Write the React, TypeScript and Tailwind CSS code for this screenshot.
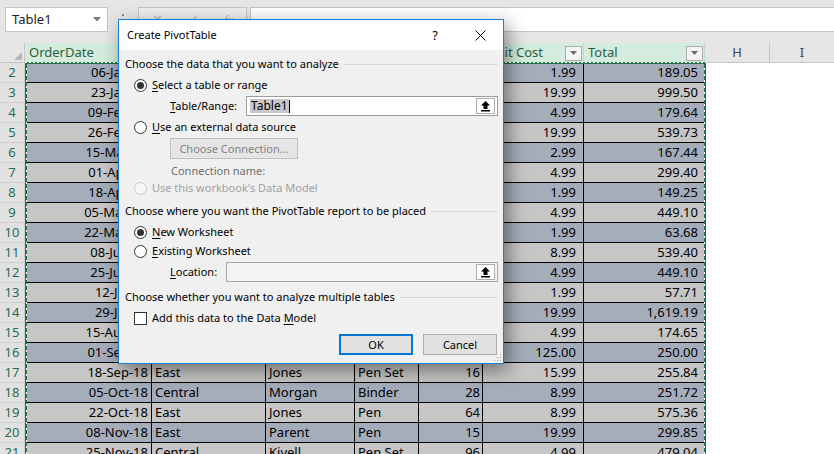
import React from "react";

const rows: [string, string, string, string, number, string, string][] = [
  ["06-Jan-18", "East", "Jones", "Pencil", 95, "1.99", "189.05"],
  ["23-Jan-18", "Central", "Kivell", "Binder", 50, "19.99", "999.50"],
  ["09-Feb-18", "Central", "Jardine", "Pencil", 36, "4.99", "179.64"],
  ["26-Feb-18", "Central", "Gill", "Pen", 27, "19.99", "539.73"],
  ["15-Mar-18", "West", "Sorvino", "Pencil", 56, "2.99", "167.44"],
  ["01-Apr-18", "East", "Jones", "Binder", 60, "4.99", "299.40"],
  ["18-Apr-18", "Central", "Andrews", "Pencil", 75, "1.99", "149.25"],
  ["05-May-18", "Central", "Jardine", "Pencil", 90, "4.99", "449.10"],
  ["22-May-18", "West", "Thompson", "Pencil", 32, "1.99", "63.68"],
  ["08-Jun-18", "East", "Jones", "Binder", 60, "8.99", "539.40"],
  ["25-Jun-18", "Central", "Morgan", "Pencil", 90, "4.99", "449.10"],
  ["12-Jul-18", "East", "Howard", "Binder", 29, "1.99", "57.71"],
  ["29-Jul-18", "East", "Parent", "Binder", 81, "19.99", "1,619.19"],
  ["15-Aug-18", "East", "Jones", "Pencil", 35, "4.99", "174.65"],
  ["01-Sep-18", "Central", "Smith", "Desk", 2, "125.00", "250.00"],
  ["18-Sep-18", "East", "Jones", "Pen Set", 16, "15.99", "255.84"],
  ["05-Oct-18", "Central", "Morgan", "Binder", 28, "8.99", "251.72"],
  ["22-Oct-18", "East", "Jones", "Pen", 64, "8.99", "575.36"],
  ["08-Nov-18", "East", "Parent", "Pen", 15, "19.99", "299.85"],
  ["25-Nov-18", "Central", "Kivell", "Pen Set", 96, "4.99", "479.04"],
];

function FilterButton() {
  return (
    <div className="ml-auto mr-[1px] w-[17px] h-[15px] border border-[#ababab] bg-[#f4f4f4] flex items-center justify-center shrink-0">
      <svg width="7" height="4" viewBox="0 0 7 4">
        <polygon points="0,0 7,0 3.5,4" fill="#6a6a6a" />
      </svg>
    </div>
  );
}

function HeaderCell({ label, w }: { label: string; w: string }) {
  return (
    <div className={`${w} shrink-0 h-full bg-[#d3ecdd] border-r border-[#c3d6ca] flex items-center pl-[4px] text-[#2b5f43] overflow-hidden whitespace-nowrap`}>
      <span>{label}</span>
      <FilterButton />
    </div>
  );
}

function Radio({ checked, disabled }: { checked?: boolean; disabled?: boolean }) {
  return (
    <span
      className={`w-[13px] h-[13px] rounded-full border flex items-center justify-center shrink-0 ${
        disabled ? "border-[#c8c8c8] bg-[#f6f6f6]" : "border-[#333333] bg-white"
      }`}
    >
      {checked && <span className="w-[7px] h-[7px] rounded-full bg-[#333333]" />}
    </span>
  );
}

function UpArrowButton() {
  return (
    <div className="w-[19px] h-[16px] my-auto mr-[2px] border border-[#adadad] bg-white flex items-center justify-center shrink-0">
      <svg width="11" height="12" viewBox="0 0 11 12">
        <polygon points="5.5,1 1,5.5 3.5,5.5 3.5,9 7.5,9 7.5,5.5 10,5.5" fill="#000" />
        <rect x="1" y="10" width="9" height="1.5" fill="#000" />
      </svg>
    </div>
  );
}

function Heading({ children }: { children: React.ReactNode }) {
  return (
    <div className="flex items-center h-[16px]">
      <span className="whitespace-nowrap">{children}</span>
      <div className="flex-1 h-px bg-[#dadada] ml-[5px]" />
    </div>
  );
}

function U({ children }: { children: React.ReactNode }) {
  return <span className="underline underline-offset-[2px] decoration-1">{children}</span>;
}

function Dialog() {
  return (
    <div className="absolute left-[118px] top-[19px] w-[386px] h-[345px] border border-[#1a7fd4] bg-[#f0f0f0] shadow-[4px_6px_18px_rgba(0,0,0,0.45)] flex flex-col font-['Noto_Sans',sans-serif] text-[11px] leading-[14px] text-black">
      {/* Title bar */}
      <div className="h-[30px] bg-white flex items-center shrink-0">
        <span className="pl-[8px] text-[11px]">Create PivotTable</span>
        <div className="ml-auto w-[44px] h-full flex items-center justify-center text-[13px]">?</div>
        <div className="w-[46px] h-full flex items-center justify-center">
          <svg width="11" height="11" viewBox="0 0 11 11">
            <path d="M0.5 0.5 L10.5 10.5 M10.5 0.5 L0.5 10.5" stroke="#000" strokeWidth="1" />
          </svg>
        </div>
      </div>

      {/* Body */}
      <div className="flex flex-col pl-[6px] pr-[5px] pt-[6px]">
        <Heading>Choose the data that you want to analyze</Heading>

        <div className="mt-[5px] h-[16px] flex items-center ml-[9px] gap-[5px]">
          <Radio checked />
          <span>
            <U>S</U>elect a table or range
          </span>
        </div>

        <div className="mt-[3px] h-[20px] flex items-center">
          <span className="ml-[45px] w-[76px] shrink-0">
            <U>T</U>able/Range:
          </span>
          <div className="flex-1 h-full border border-[#9c9c9c] bg-white flex items-center">
            <span className="ml-[3px] bg-[#c8c8c8] px-[1px] leading-[14px] text-[12px]">Table1</span>
            <span className="w-px h-[13px] bg-black" />
            <div className="ml-auto h-full flex">
              <UpArrowButton />
            </div>
          </div>
        </div>

        <div className="mt-[3px] h-[16px] flex items-center ml-[9px] gap-[5px]">
          <Radio />
          <span>
            <U>U</U>se an external data source
          </span>
        </div>

        <div className="mt-[3px] h-[21px] ml-[45px] w-[128px] border border-[#bfbfbf] bg-[#e5e5e5] text-[#838383] flex items-center justify-center">
          Choose Connection...
        </div>

        <div className="mt-[4px] h-[16px] flex items-center ml-[46px] text-[#6d6d6d]">Connection name:</div>

        <div className="mt-[1px] h-[16px] flex items-center ml-[9px] gap-[5px] text-[#a0a0a0]">
          <Radio disabled />
          <span>Use this workbook's Data Model</span>
        </div>

        <div className="mt-[7px]">
          <Heading>Choose where you want the PivotTable report to be placed</Heading>
        </div>

        <div className="mt-[5px] h-[16px] flex items-center ml-[9px] gap-[5px]">
          <Radio checked />
          <span>
            <U>N</U>ew Worksheet
          </span>
        </div>

        <div className="mt-[3px] h-[16px] flex items-center ml-[9px] gap-[5px]">
          <Radio />
          <span>
            <U>E</U>xisting Worksheet
          </span>
        </div>

        <div className="mt-[3px] h-[20px] flex items-center">
          <span className="ml-[45px] w-[56px] shrink-0">
            <U>L</U>ocation:
          </span>
          <div className="flex-1 h-full border border-[#a8a8a8] bg-[#f3f3f3] flex items-center">
            <div className="ml-auto h-full flex">
              <UpArrowButton />
            </div>
          </div>
        </div>

        <div className="mt-[7px]">
          <Heading>Choose whether you want to analyze multiple tables</Heading>
        </div>

        <div className="mt-[5px] h-[16px] flex items-center ml-[9px] gap-[5px]">
          <span className="w-[13px] h-[13px] border border-[#333333] bg-white shrink-0" />
          <span>
            Add this data to the Data <U>M</U>odel
          </span>
        </div>

        <div className="mt-[8px] h-[21px] flex justify-end gap-[10px] pr-[1px]">
          <div className="w-[74px] h-full border-2 border-[#0078d7] bg-[#e1e1e1] flex items-center justify-center">OK</div>
          <div className="w-[74px] h-full border border-[#adadad] bg-[#e1e1e1] flex items-center justify-center">Cancel</div>
        </div>
      </div>

      {/* Resize grip */}
      <svg className="absolute right-[1px] bottom-[1px]" width="10" height="10" viewBox="0 0 10 10">
        <rect x="8" y="2" width="1" height="1" fill="#a0a0a0" />
        <rect x="5" y="5" width="1" height="1" fill="#a0a0a0" />
        <rect x="8" y="5" width="1" height="1" fill="#a0a0a0" />
        <rect x="2" y="8" width="1" height="1" fill="#a0a0a0" />
        <rect x="5" y="8" width="1" height="1" fill="#a0a0a0" />
        <rect x="8" y="8" width="1" height="1" fill="#a0a0a0" />
      </svg>
    </div>
  );
}

export default function App() {
  return (
    <div className="relative w-[834px] h-[454px] overflow-hidden bg-white font-['Noto_Sans',sans-serif] text-[13px] text-black">
      {/* Formula bar */}
      <div className="h-[43px] bg-[#e6e6e6] flex items-start pt-[7px]">
        <div className="ml-[5px] w-[103px] h-[25px] bg-white border border-[#c6c6c6] flex items-center pl-[6px] pr-[6px] shrink-0">
          <span className="text-[#222]">Table1</span>
          <svg className="ml-auto" width="8" height="5" viewBox="0 0 8 5">
            <polygon points="0,0 8,0 4,4.5" fill="#777" />
          </svg>
        </div>
        <div className="w-[30px] h-[25px] flex flex-col items-center justify-center gap-[3px] shrink-0">
          <span className="w-[2px] h-[2px] bg-[#8a8a8a]" />
          <span className="w-[2px] h-[2px] bg-[#8a8a8a]" />
          <span className="w-[2px] h-[2px] bg-[#8a8a8a]" />
        </div>
        <div className="w-[109px] h-[25px] border border-[#c6c6c6] bg-[#eeeeee] flex items-center justify-around text-[#b4b4b4] shrink-0">
          <span>✕</span>
          <span>✓</span>
          <span className="italic font-['Liberation_Serif',serif]">fx</span>
        </div>
        <div className="ml-[3px] flex-1 h-[25px] bg-white border border-r-0 border-[#c6c6c6]" />
      </div>

      {/* Grid */}
      <div className="relative">
        {/* Column header row */}
        <div className="flex h-[20px]">
          <div className="w-[25px] shrink-0 h-full bg-[#e6e6e6] border-r border-b border-[#c6c6c6] flex items-end justify-end pr-[2px] pb-[2px]">
            <svg width="8" height="8" viewBox="0 0 8 8">
              <polygon points="8,0 8,8 0,8" fill="#b6b6b6" />
            </svg>
          </div>
          <HeaderCell label="OrderDate" w="w-[127px]" />
          <HeaderCell label="Region" w="w-[114px]" />
          <HeaderCell label="Rep" w="w-[89px]" />
          <HeaderCell label="Item" w="w-[64px]" />
          <HeaderCell label="Units" w="w-[64px]" />
          <HeaderCell label="Unit Cost" w="w-[101px]" />
          <HeaderCell label="Total" w="w-[121px]" />
          <div className="w-[65px] shrink-0 h-full bg-[#e6e6e6] border-r border-b border-[#c6c6c6] flex items-center justify-center text-[#444]">
            H
          </div>
          <div className="flex-1 h-full bg-[#e6e6e6] border-b border-[#c6c6c6] flex items-center justify-center text-[#444]">
            I
          </div>
        </div>

        {/* Data rows */}
        {rows.map((r, i) => {
          const bg = i % 2 === 0 ? "bg-[#a6adba]" : "bg-[#c6c6c6]";
          return (
            <div key={i} className="flex h-[20px]">
              <div className="w-[25px] shrink-0 h-full bg-[#e1e1e1] border-b border-r border-[#cfcfcf] flex items-center justify-center text-[#2a6b4e]">
                {i + 2}
              </div>
              <div className={`w-[127px] shrink-0 h-full ${bg} border-r border-b border-black flex items-center justify-end pr-[3px]`}>{r[0]}</div>
              <div className={`w-[114px] shrink-0 h-full ${bg} border-r border-b border-black flex items-center pl-[3px]`}>{r[1]}</div>
              <div className={`w-[89px] shrink-0 h-full ${bg} border-r border-b border-black flex items-center pl-[3px]`}>{r[2]}</div>
              <div className={`w-[64px] shrink-0 h-full ${bg} border-r border-b border-black flex items-center pl-[3px]`}>{r[3]}</div>
              <div className={`w-[64px] shrink-0 h-full ${bg} border-r border-b border-black flex items-center justify-end pr-[2px]`}>{r[4]}</div>
              <div className={`w-[101px] shrink-0 h-full ${bg} border-r border-b border-black flex items-center justify-end pr-[7px]`}>{r[5]}</div>
              <div className={`w-[121px] shrink-0 h-full ${bg} border-b border-black flex items-center justify-end pr-[7px]`}>{r[6]}</div>
              <div className="flex-1 h-full bg-white" />
            </div>
          );
        })}

        {/* Copy marquee */}
        <div className="absolute left-[25px] top-[19px] w-[2px] h-[420px] bg-[#217346]" />
        <div className="absolute left-[26px] top-[19px] w-[1px] h-[420px] bg-[image:repeating-linear-gradient(to_bottom,#ffffff_0px,#ffffff_2px,transparent_2px,transparent_6px)]" />
        <div className="absolute left-[704px] top-[19px] w-[2px] h-[420px] bg-[#217346]" />
        <div className="absolute left-[704px] top-[19px] w-[1px] h-[420px] bg-[image:repeating-linear-gradient(to_bottom,#ffffff_0px,#ffffff_2px,transparent_2px,transparent_6px)]" />
        <div className="absolute left-[25px] top-[19px] w-[681px] h-[2px] bg-[#217346]" />
        <div className="absolute left-[25px] top-[19px] w-[681px] h-[1px] bg-[image:repeating-linear-gradient(to_right,#ffffff_0px,#ffffff_2px,transparent_2px,transparent_4px)]" />
      </div>

      <Dialog />
    </div>
  );
}
